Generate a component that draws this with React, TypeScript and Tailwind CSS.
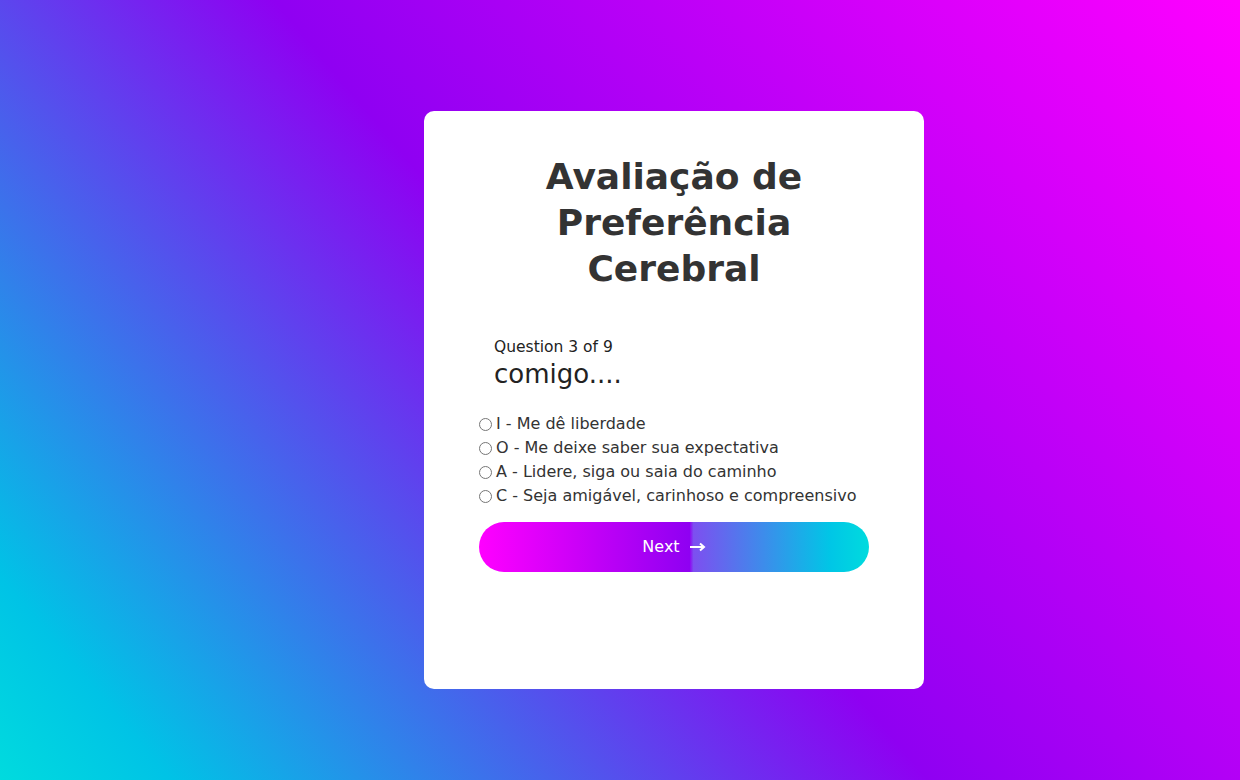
import { useState } from 'react';

const options = [
  'I - Me dê liberdade',
  'O - Me deixe saber sua expectativa',
  'A - Lidere, siga ou saia do caminho',
  'C - Seja amigável, carinhoso e compreensivo',
];

const App = () => {
  const [selected, setSelected] = useState<number | null>(null);

  return (
    <div className="min-h-screen w-full bg-[linear-gradient(50deg,#00dbde_0%,#00c3e6_9%,#8f00f2_49%,#ff00ff_100%)] pt-[111px] pl-[424px] font-['DejaVu_Sans',sans-serif]">
      <div className="w-[500px] h-[578px] rounded-[10px] bg-white px-[55px] pt-[43px]">
        <h1 className="text-center text-[36px] leading-[46px] font-bold text-[#333333] px-[40px]">
          Avaliação de Preferência Cerebral
        </h1>

        <div className="mt-[45px] pl-[15px]">
          <div className="text-[15.5px] leading-[20px] text-[#222222]">Question 3 of 9</div>
          <div className="text-[26px] leading-[34px] text-[#222222]">comigo....</div>
        </div>

        <div className="mt-[21px] flex flex-col">
          {options.map((opt, i) => (
            <label key={i} className="flex items-center h-[24px] text-[16px] text-[#333333] cursor-pointer">
              <input
                type="radio"
                name="q3"
                checked={selected === i}
                onChange={() => setSelected(i)}
                className="m-0 mr-[4px] w-[13px] h-[13px]"
              />
              {opt}
            </label>
          ))}
        </div>

        <button className="mt-[14px] w-full h-[50px] rounded-full bg-[linear-gradient(to_right,#ff00ff_0%,#cc00f8_25%,#8f00f2_54%,#7d4ff0_55%,#00c6e6_90%,#00dbde_100%)] flex items-center justify-center gap-[10px] text-white text-[16px] font-medium">
          <span>Next</span>
          <svg width="16" height="10" viewBox="0 0 16 10" fill="none">
            <path d="M0 5h13" stroke="white" strokeWidth="2" />
            <path d="M10 1.5l4 3.5-4 3.5" stroke="white" strokeWidth="2" fill="none" />
          </svg>
        </button>
      </div>
    </div>
  );
};

export default App;
